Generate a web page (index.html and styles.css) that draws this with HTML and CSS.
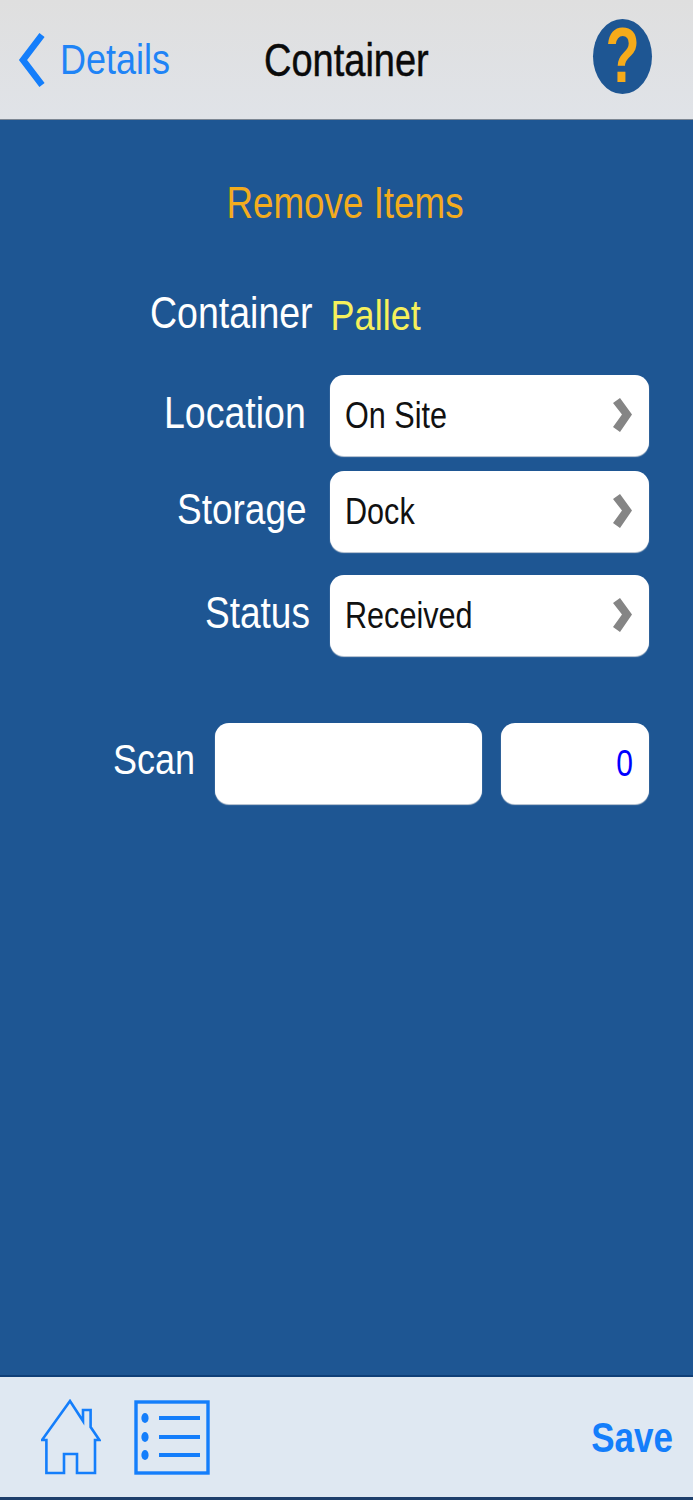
FILE: index.html
```html
<!DOCTYPE html>
<html lang="en">
<head>
<meta charset="utf-8">
<title>Container</title>
<link rel="stylesheet" href="styles.css">
</head>
<body>
<div class="screen">
  <header class="navbar">
    <a class="back">
      <svg class="back-icon" width="28" height="56" viewBox="0 0 28 56"><path d="M24 3 L5 28 L24 53" fill="none" stroke="#147efb" stroke-width="6.5"/></svg>
      <span class="st back-text">Details</span>
    </a>
    <span class="st title">Container</span>
    <span class="help"><span class="help-mark">?</span></span>
  </header>
  <main class="content">
    <div class="heading"><span class="st">Remove Items</span></div>
    <div class="row row-container">
      <span class="st label">Container</span>
      <span class="st value">Pallet</span>
    </div>
    <div class="row row-location">
      <span class="st label">Location</span>
      <div class="field"><span class="st field-text">On Site</span><svg class="chev" width="20" height="35" viewBox="0 0 20 35"><polygon points="0,5 7,0 19,16.5 7,34 0,29 9,16.5" fill="#858585"/></svg></div>
    </div>
    <div class="row row-storage">
      <span class="st label">Storage</span>
      <div class="field"><span class="st field-text">Dock</span><svg class="chev" width="20" height="35" viewBox="0 0 20 35"><polygon points="0,5 7,0 19,16.5 7,34 0,29 9,16.5" fill="#858585"/></svg></div>
    </div>
    <div class="row row-status">
      <span class="st label">Status</span>
      <div class="field"><span class="st field-text">Received</span><svg class="chev" width="20" height="35" viewBox="0 0 20 35"><polygon points="0,5 7,0 19,16.5 7,34 0,29 9,16.5" fill="#858585"/></svg></div>
    </div>
    <div class="row row-scan">
      <span class="st label">Scan</span>
      <div class="field scan-input"></div>
      <div class="field scan-count"><span class="st count">0</span></div>
    </div>
  </main>
  <footer class="tabbar">
    <svg class="home" width="60" height="76" viewBox="0 0 60 76"><path d="M23 74 V55 H36 V74 H54 V41 H58.4 L49.6 28 V11 H42 V22 L29 2 L1 41 H5.4 V74 Z" fill="none" stroke="#147efb" stroke-width="2.6"/></svg>
    <svg class="list" width="76" height="76" viewBox="0 0 76 76"><rect x="2" y="3" width="72" height="71" fill="none" stroke="#147efb" stroke-width="3.4"/><ellipse cx="11" cy="19" rx="3.6" ry="5" fill="#147efb"/><ellipse cx="11" cy="38" rx="3.6" ry="5" fill="#147efb"/><ellipse cx="11" cy="56" rx="3.6" ry="5" fill="#147efb"/><path d="M25 19 H66 M25 38 H66 M25 56 H66" stroke="#147efb" stroke-width="4"/></svg>
    <span class="st save">Save</span>
  </footer>
</div>
</body>
</html>
```
FILE: styles.css
```css
* { box-sizing: border-box; }
html, body { margin: 0; padding: 0; }
body { font-family: "Liberation Sans", Arial, sans-serif; background: #1e5693; }
.screen { width: 693px; height: 1500px; display: flex; flex-direction: column; overflow: hidden; }
.st { display: inline-block; transform: scaleY(1.2); white-space: nowrap; line-height: 1; }

.navbar { height: 120px; flex: none; display: flex; align-items: center; position: relative;
  background: linear-gradient(#dfdfdf, #e0e3e8); border-bottom: 1px solid #7d8794; }
.back { display: flex; align-items: center; margin-left: 18px; }
.back-icon { margin-right: 14px; }
.back-text { font-size: 36px; color: #1f84f6; }
.title { position: absolute; left: 264px; top: 41px; font-size: 38px; color: #0a0a0a; -webkit-text-stroke: 0.4px #0a0a0a; }
.help { position: absolute; left: 593px; top: 19px; width: 59px; height: 75px; border-radius: 50%; background: #1e5693;
  display: flex; align-items: center; justify-content: center; }
.help-mark { font-size: 56px; font-weight: bold; color: #f6ab1a; transform: translateY(-2px) scaleY(1.4); line-height: 1; }

.content { flex: 1; display: flex; flex-direction: column; background: #1e5693; padding-top: 63px; }
.heading { height: 44px; text-align: center; font-size: 36.8px; color: #f3ac1e; padding-right: 3px; }
.row { display: flex; height: 81px; align-items: center; padding-right: 44px; }
.label { font-size: 37px; color: #fff; }
.row-container { margin-top: 46px; padding-left: 150px; height: 82px; }
.row-container .label { font-size: 37.5px; transform: scaleY(1.2); }
.value { font-size: 36px; color: #f6f05c; margin-left: 18px; transform: translateY(2px) scaleY(1.2); }
.row-location { margin-top: 20px; padding-left: 164px; }
.row-storage { margin-top: 15px; padding-left: 177px; }
.row-status { margin-top: 23px; padding-left: 205px; }
.row-scan { margin-top: 67px; padding-left: 113px; }
.row-location .label, .row-storage .label, .row-status .label { transform: translateY(-2px) scaleY(1.2); }
.row-location .label { font-size: 37.5px; }
.row-scan .label { font-size: 36px; transform: translateY(-4px) scaleY(1.2); }

.field { width: 319px; height: 81px; margin-left: auto; background: #fff; border-radius: 14px; display: flex; align-items: center;
  justify-content: space-between; padding: 0 16px 0 15px; box-shadow: 0 1px 1px #c8d0da; }
.field-text { font-size: 30.6px; color: #111; }
.chev { flex: none; }
.row-scan .scan-input { width: 267px; margin-right: 19px; }
.row-scan .scan-count { width: 148px; margin-left: 0; justify-content: flex-end; }
.count { font-size: 30px; color: #0000ff; }

.tabbar { height: 125px; flex: none; display: flex; align-items: center; position: relative; background: #dfe8f2;
  border-top: 2px solid #0f3f78; border-bottom: 3px solid #1e3f6c; padding: 0 20px 0 41px; }
.home { flex: none; }
.list { flex: none; margin-left: 33px; }
.save { margin-left: auto; font-size: 35px; font-weight: bold; color: #147efb; transform: translateY(-1px) scaleY(1.2); }
```
